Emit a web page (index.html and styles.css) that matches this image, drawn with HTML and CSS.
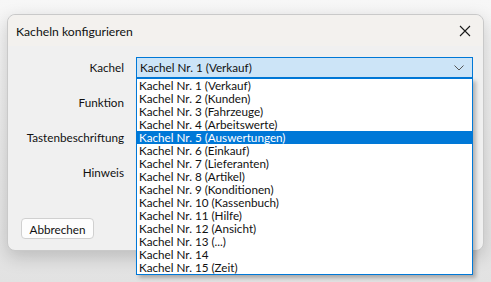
FILE: index.html
```html
<!DOCTYPE html>
<html>
<head>
<meta charset="utf-8">
<title>Kacheln konfigurieren</title>
<link rel="stylesheet" href="styles.css">
</head>
<body>
<div class="dialog">
  <div class="titlebar">
    <span class="caption">Kacheln konfigurieren</span>
    <svg class="close" width="12" height="12" viewBox="0 0 12 12"><path d="M1 1L11 11M11 1L1 11" stroke="#1a1a1a" stroke-width="1.1"/></svg>
  </div>
  <div class="content">
    <div class="form">
      <label class="lbl">Kachel</label>
      <div class="combo">
        <span>Kachel Nr. 1 (Verkauf)</span>
        <svg class="chev" width="10" height="6" viewBox="0 0 10 6"><path d="M0.5 0.5L5 5L9.5 0.5" fill="none" stroke="#555" stroke-width="1"/></svg>
        <ul class="list">
          <li>Kachel Nr. 1 (Verkauf)</li>
          <li>Kachel Nr. 2 (Kunden)</li>
          <li>Kachel Nr. 3 (Fahrzeuge)</li>
          <li>Kachel Nr. 4 (Arbeitswerte)</li>
          <li class="sel">Kachel Nr. 5 (Auswertungen)</li>
          <li>Kachel Nr. 6 (Einkauf)</li>
          <li>Kachel Nr. 7 (Lieferanten)</li>
          <li>Kachel Nr. 8 (Artikel)</li>
          <li>Kachel Nr. 9 (Konditionen)</li>
          <li>Kachel Nr. 10 (Kassenbuch)</li>
          <li>Kachel Nr. 11 (Hilfe)</li>
          <li>Kachel Nr. 12 (Ansicht)</li>
          <li>Kachel Nr. 13 (...)</li>
          <li>Kachel Nr. 14</li>
          <li>Kachel Nr. 15 (Zeit)</li>
        </ul>
      </div>
      <label class="lbl">Funktion</label>
      <div class="field"></div>
      <label class="lbl">Tastenbeschriftung</label>
      <div class="field"></div>
      <label class="lbl">Hinweis</label>
      <div class="field"></div>
    </div>
    <div class="buttons">
      <button class="btn">Abbrechen</button>
    </div>
  </div>
</div>
</body>
</html>
```

FILE: styles.css
```css
html,body{margin:0;padding:0;}
body{width:491px;height:282px;overflow:hidden;background:linear-gradient(#f7f7f7,#e9e9e9 60%,#e2e2e2);font-family:Lato,"Noto Sans",sans-serif;font-size:11.7px;color:#111;}
.dialog{margin:14px 0 0 7px;width:475px;height:235px;border:1px solid #c9c9c9;border-radius:8px;background:#f0f0f0;box-shadow:0 6px 18px rgba(0,0,0,0.18);overflow:visible;}
.titlebar{height:31px;display:flex;align-items:center;justify-content:space-between;padding:0 10px 0 8px;background:#f3f1ee;border-radius:8px 8px 0 0;}
.caption{font-size:12.2px;padding-top:2px;}
.close{margin-right:2px;}
.content{position:relative;height:204px;}
.form{display:grid;grid-template-columns:116px 337px;column-gap:12px;row-gap:14px;padding-top:11px;}
.lbl{text-align:right;line-height:20px;}
.combo{position:relative;height:19px;border:1px solid #0078d7;background:#cce4f7;display:flex;align-items:center;justify-content:space-between;padding:0 8px 0 3px;}
.combo span{margin-top:-1px;}
.chev{margin-top:1px;}
.field{height:21px;}
.list{position:absolute;left:-1px;top:20px;width:335px;margin:0;padding:0;list-style:none;background:#fff;border:1px solid #0078d7;box-shadow:3px 3px 4px rgba(0,0,0,0.25);z-index:2;}
.list li{height:13px;line-height:13px;padding-left:2px;white-space:nowrap;}
.list li.sel{background:#0078d7;color:#fff;}
.buttons{position:absolute;left:13px;top:172px;}
.btn{width:73px;height:21px;padding:0;border:1px solid #d0d0d0;border-radius:4px;background:#fdfdfd;font-family:inherit;font-size:11.7px;color:#111;}
```
